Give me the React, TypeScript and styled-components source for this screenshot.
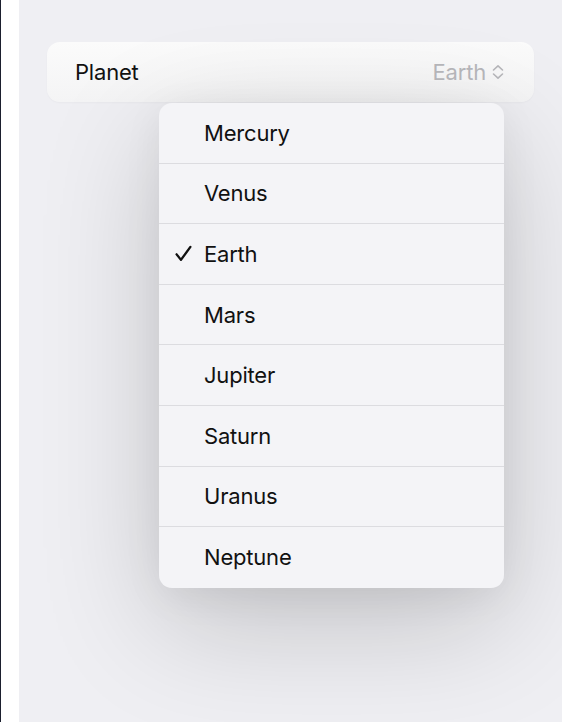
import React from "react";
import styled, { createGlobalStyle } from "styled-components";

const Global = createGlobalStyle`
  html, body { margin: 0; padding: 0; background: #efeff3; overflow: hidden; }
  body { font-family: Inter, "Noto Sans", "Liberation Sans", sans-serif; -webkit-font-smoothing: antialiased; }
`;

const Frame = styled.div`
  display: flex;
  width: 100vw;
  height: 100vh;
  overflow: hidden;
`;

const Rail = styled.div`
  flex: 0 0 1px;
  background: #1b1f2e;
`;

const Gutter = styled.div`
  flex: 0 0 18px;
  background: #ffffff;
`;

const Stage = styled.div`
  flex: 1 1 auto;
  min-width: 0;
  background: #efeff3;
  padding: 42px 0 0 28px;
  box-sizing: border-box;
`;

const PickerRow = styled.div`
  width: 487px;
  height: 60px;
  box-sizing: border-box;
  border-radius: 13px;
  background: linear-gradient(180deg, #fbfbfb 0%, #f4f4f5 100%);
  display: flex;
  align-items: center;
  justify-content: space-between;
  padding: 0 30px 0 28px;
  box-shadow: 0 1px 2px rgba(0, 0, 0, 0.03);
`;

const Label = styled.span`
  font-size: 22px;
  color: #111111;
  letter-spacing: -0.2px;
`;

const Value = styled.span`
  display: flex;
  align-items: center;
  gap: 6px;
  font-size: 22px;
  letter-spacing: -0.2px;
  color: #b4b4b8;
`;

const Menu = styled.ul`
  list-style: none;
  margin: 1px 0 0 112px;
  padding: 0;
  width: 345px;
  border-radius: 13px;
  background: #f4f4f7;
  overflow: hidden;
  box-shadow: 0 36px 120px rgba(0, 0, 0, 0.19), 0 8px 40px rgba(0, 0, 0, 0.06);
`;

const Item = styled.li<{ $last?: boolean }>`
  height: 60.6px;
  display: flex;
  align-items: center;
  box-sizing: border-box;
  border-bottom: ${(p) => (p.$last ? "none" : "1px solid #dcdce0")};
  font-size: 22px;
  color: #111111;
  letter-spacing: -0.2px;
`;

const Check = styled.span`
  width: 45px;
  display: flex;
  justify-content: flex-end;
  padding-right: 12px;
  box-sizing: border-box;
`;

const planets = ["Mercury", "Venus", "Earth", "Mars", "Jupiter", "Saturn", "Uranus", "Neptune"];

export default function App() {
  return (
    <>
      <Global />
      <Frame>
        <Rail />
        <Gutter />
        <Stage>
          <PickerRow>
            <Label>Planet</Label>
            <Value>
              Earth
              <svg width="12" height="16" viewBox="0 0 12 16" fill="none">
                <path d="M1.5 6 L6 1.8 L10.5 6" stroke="#b4b4b8" strokeWidth="1.6" strokeLinecap="round" strokeLinejoin="round" />
                <path d="M1.5 10 L6 14.2 L10.5 10" stroke="#b4b4b8" strokeWidth="1.6" strokeLinecap="round" strokeLinejoin="round" />
              </svg>
            </Value>
          </PickerRow>
          <Menu>
            {planets.map((p, i) => (
              <Item key={p} $last={i === planets.length - 1}>
                <Check>
                  {p === "Earth" && (
                    <svg width="17" height="17" viewBox="0 0 16 16" fill="none">
                      <path d="M1.5 8.8 L5.6 14 L14.5 1.8" stroke="#111" strokeWidth="2.2" strokeLinecap="round" strokeLinejoin="round" />
                    </svg>
                  )}
                </Check>
                {p}
              </Item>
            ))}
          </Menu>
        </Stage>
      </Frame>
    </>
  );
}
